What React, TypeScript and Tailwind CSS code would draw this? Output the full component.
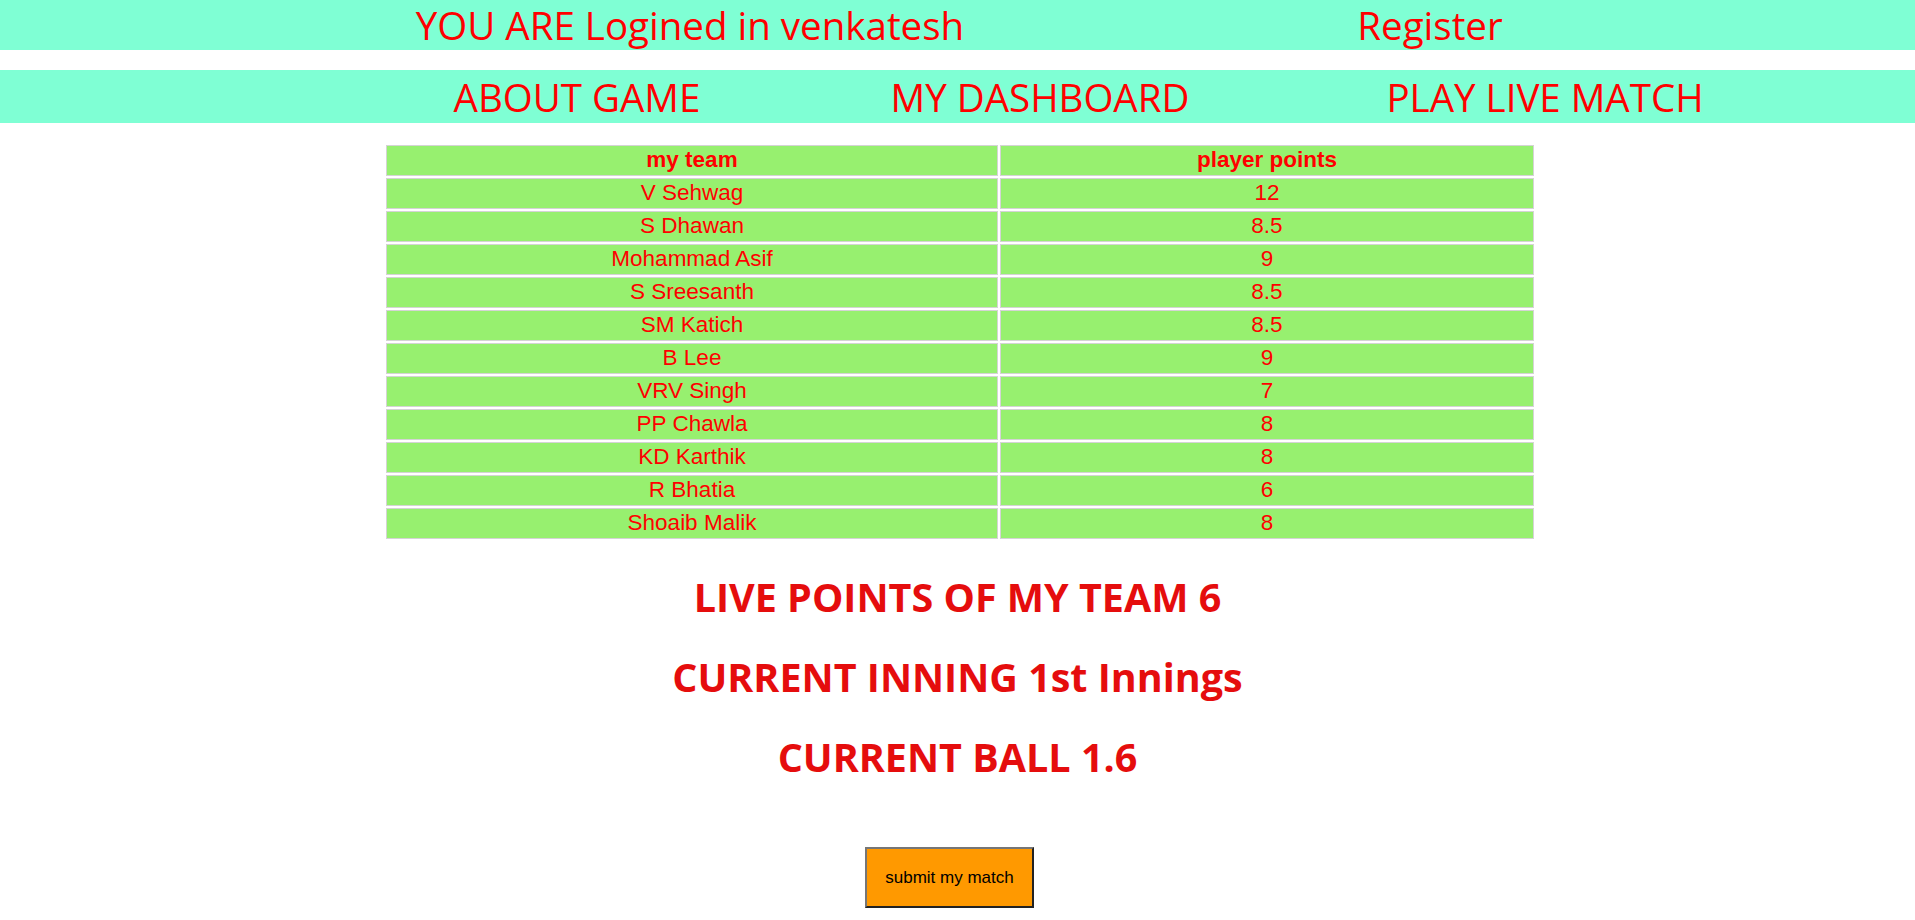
import React from "react";

const team = [
  { name: "V Sehwag", pts: "12" },
  { name: "S Dhawan", pts: "8.5" },
  { name: "Mohammad Asif", pts: "9" },
  { name: "S Sreesanth", pts: "8.5" },
  { name: "SM Katich", pts: "8.5" },
  { name: "B Lee", pts: "9" },
  { name: "VRV Singh", pts: "7" },
  { name: "PP Chawla", pts: "8" },
  { name: "KD Karthik", pts: "8" },
  { name: "R Bhatia", pts: "6" },
  { name: "Shoaib Malik", pts: "8" },
];

const cell = "h-[31px] p-0 pb-px border border-[#d4d4d4] bg-[#97f06f] text-center align-middle leading-none";

export default function App() {
  return (
    <div className="min-h-screen bg-white font-['Open_Sans',sans-serif] text-[#ff0000]">
      {/* login bar */}
      <div className="h-[50px] bg-[#7fffd4] flex text-[38.5px] leading-[50px] whitespace-nowrap">
        <div className="ml-[390px] w-[600px] text-center">YOU ARE Logined in venkatesh</div>
        <div className="ml-[140px] w-[600px] text-center">Register</div>
      </div>

      {/* nav bar */}
      <div className="mt-[20px] h-[53px] pt-[3px] bg-[#7fffd4] flex text-[38.5px] leading-[49px] whitespace-nowrap">
        <div className="ml-[407px] w-[340px] text-center">ABOUT GAME</div>
        <div className="ml-[123px] w-[340px] text-center">MY DASHBOARD</div>
        <div className="ml-[165px] w-[340px] text-center">PLAY LIVE MATCH</div>
      </div>

      <table className="mt-[20px] ml-[384px] w-[1152px] border-separate border-spacing-[2px] font-['Liberation_Sans',Arial,sans-serif] text-[22.5px]">
        <thead>
          <tr>
            <th className={`${cell} w-[612px] font-bold`}>my team</th>
            <th className={`${cell} font-bold`}>player points</th>
          </tr>
        </thead>
        <tbody>
          {team.map((p) => (
            <tr key={p.name}>
              <td className={cell}>{p.name}</td>
              <td className={cell}>{p.pts}</td>
            </tr>
          ))}
        </tbody>
      </table>

      <div className="mt-[16px] text-center font-bold text-[#e50d0d] text-[39.5px]">
        <div className="h-[80px] leading-[80px]">LIVE POINTS OF MY TEAM 6</div>
        <div className="h-[80px] leading-[80px]">CURRENT INNING 1st Innings</div>
        <div className="h-[80px] leading-[80px]">CURRENT BALL 1.6</div>
      </div>

      <div className="mt-[50px] flex justify-center pb-4">
        <button className="ml-[-16px] w-[169px] h-[61px] bg-[#ff9900] border-2 border-t-[#767676] border-l-[#767676] border-r-[#222] border-b-[#222] text-black text-[17px] font-['Liberation_Sans',Arial,sans-serif]">
          submit my match
        </button>
      </div>
    </div>
  );
}
